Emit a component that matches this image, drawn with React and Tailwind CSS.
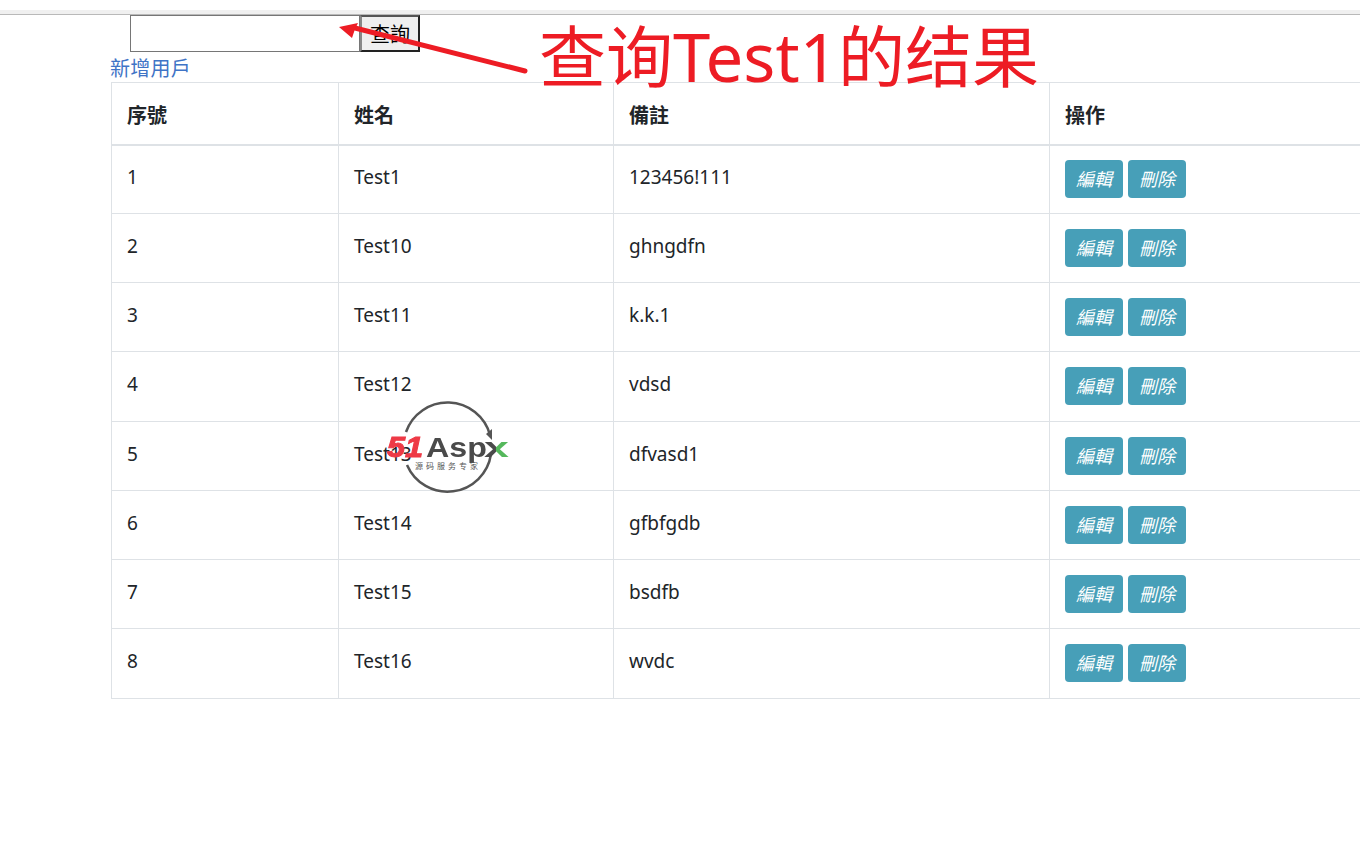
import React from 'react';

const users = [
  { id: 1, name: 'Test1', note: '123456!111' },
  { id: 2, name: 'Test10', note: 'ghngdfn' },
  { id: 3, name: 'Test11', note: 'k.k.1' },
  { id: 4, name: 'Test12', note: 'vdsd', tall: true },
  { id: 5, name: 'Test13', note: 'dfvasd1' },
  { id: 6, name: 'Test14', note: 'gfbfgdb' },
  { id: 7, name: 'Test15', note: 'bsdfb' },
  { id: 8, name: 'Test16', note: 'wvdc', tall: true },
];

const fontStack = "font-['Noto_Sans','Noto_Sans_CJK_TC',sans-serif]";

const ActionButton = ({ label }) => (
  <button className="h-[38px] w-[58px] rounded-[4px] bg-[#479fb8] text-[18px] italic text-white leading-none">
    {label}
  </button>
);

// watermark that sits over the table
const Watermark = () => (
  <div className="absolute left-[386px] top-[402px] h-[94px] w-[126px]">
    <svg width="126" height="94" viewBox="0 0 126 94" className="absolute left-0 top-0 overflow-visible">
      <path d="M20 30 A44 44 0 0 1 104 33" fill="none" stroke="#555" strokeWidth="2.5" />
      <path d="M105 52 A44 44 0 0 1 21 63" fill="none" stroke="#555" strokeWidth="2.5" />
      <path d="M100 32 L106 27 L106 38 Z" fill="#555" />
    </svg>
    <div className="absolute left-[1px] top-[28px] origin-left scale-x-[1.12] font-['Liberation_Sans',sans-serif] text-[29px] font-bold italic leading-[34px] text-[#ee3a46] [-webkit-text-stroke:1px_#ee3a46]">
      51
    </div>
    <div className="absolute left-[40px] top-[29px] origin-left scale-x-[1.15] font-['Liberation_Sans',sans-serif] text-[28px] font-bold leading-[34px] text-[#4a4a4a]">
      Asp
    </div>
    <div className="absolute left-[98px] top-[29px] origin-left scale-x-[1.6] bg-[linear-gradient(90deg,#4a4a4a_45%,#55b85c_45%)] bg-clip-text font-['Liberation_Sans',sans-serif] text-[28px] font-bold leading-[34px] text-transparent">
      x
    </div>
    <div className="absolute left-[29px] top-[59px] font-['Noto_Sans_CJK_SC',sans-serif] text-[8px] leading-[10px] tracking-[3px] text-[#555]">
      源码服务专家
    </div>
  </div>
);

const Annotation = () => (
  <>
    <svg width="200" height="70" viewBox="0 0 200 70" className="absolute left-[335px] top-[15px]">
      <path d="M190 56 L20 13" stroke="#ed1c24" strokeWidth="5" strokeLinecap="round" />
      <path d="M4 12 L23 8 L20 14 L17 23 Z" fill="#ed1c24" />
    </svg>
    <div className="absolute left-[539px] top-[14px] font-['Noto_Sans','Noto_Sans_CJK_SC',sans-serif] text-[67px] leading-[84px] text-[#ed1c24] whitespace-nowrap">
      查询Test1的结果
    </div>
  </>
);

const App = () => {
  return (
    <div className={`relative h-[866px] w-[1360px] overflow-hidden bg-white ${fontStack} text-[#212529]`}>
      <div className="h-[10px] bg-white" />
      <div className="h-[5px] border-b border-[#b9b9b9] bg-[#f0f0f0]" />

      <div className="flex h-[37px] pl-[130px]">
        <input className="h-[37px] w-[230px] border border-[#767676] bg-white" />
        <button className="h-[37px] w-[60px] border-2 border-t-[#555] border-l-[#888] border-r-[#222] border-b-[#222] bg-[#efefef] pt-[2px] text-[20px] leading-none text-black">
          查詢
        </button>
      </div>

      <div className="h-[30px] pl-[110px] pt-[3px] text-[20px] leading-[28px] tracking-[0.25px] text-[#3f74c6]">新增用戶</div>

      <table className="ml-[111px] w-[1260px] table-fixed border-collapse text-[19px]">
        <colgroup>
          <col className="w-[227px]" />
          <col className="w-[275px]" />
          <col className="w-[436px]" />
          <col />
        </colgroup>
        <thead>
          <tr className="h-[62px]">
            {['序號', '姓名', '備註', '操作'].map((h) => (
              <th key={h} className="border border-b-2 border-[#dee2e6] px-[15px] pt-[5px] text-left text-[20px] font-bold">
                {h}
              </th>
            ))}
          </tr>
        </thead>
        <tbody>
          {users.map((u) => (
            <tr key={u.id} className={u.tall ? 'h-[70px]' : 'h-[69px]'}>
              <td className="border border-[#dee2e6] px-[15px] pb-[4px]">{u.id}</td>
              <td className="border border-[#dee2e6] px-[15px] pb-[4px]">{u.name}</td>
              <td className="border border-[#dee2e6] px-[15px] pb-[4px]">{u.note}</td>
              <td className={u.tall ? 'border border-[#dee2e6] px-[15px] pb-[2px]' : 'border border-[#dee2e6] px-[15px]'}>
                <div className="flex gap-[5px]">
                  <ActionButton label="編輯" />
                  <ActionButton label="刪除" />
                </div>
              </td>
            </tr>
          ))}
        </tbody>
      </table>

      <Watermark />
      <Annotation />
    </div>
  );
};

export default App;
